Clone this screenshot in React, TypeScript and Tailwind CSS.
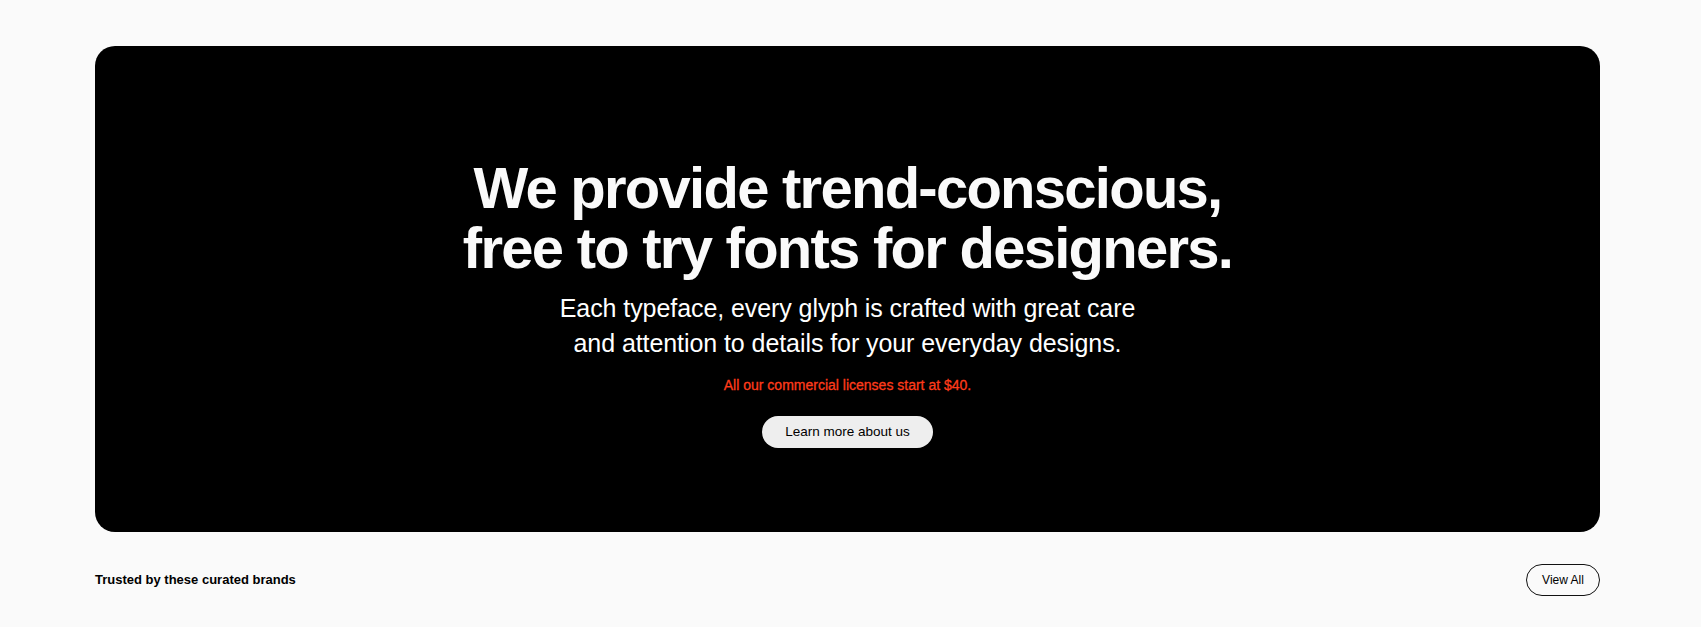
import React from "react";

export default function App() {
  return (
    <div
      className="min-h-[627px] w-full bg-[#fafafa] pt-[46px]"
      style={{ fontFamily: '"Liberation Sans", Arial, sans-serif' }}
    >
      <div className="ml-[95px] w-[1505px]">
        <section className="flex h-[486px] flex-col items-center rounded-[20px] bg-black pt-[112px] text-center">
          <h1 className="text-[58px] font-bold leading-[60px] tracking-[-0.03em] text-[#fafafa]">
            We provide trend-conscious,
            <br />
            free to try fonts for designers.
          </h1>
          <p className="mt-[13px] text-[25px] leading-[35px] tracking-[-0.003em] text-white">
            Each typeface, every glyph is crafted with great care
            <br />
            and attention to details for your everyday designs.
          </p>
          <p
            className="mt-[14px] text-[14px] leading-[20px] text-[#ff3b1a]"
            style={{ WebkitTextStroke: "0.3px #ff3b1a" }}
          >
            All our commercial licenses start at $40.
          </p>
          <button className="mt-[21px] h-[32px] w-[171px] rounded-full bg-[#eeeeee] text-[13.5px] text-black">
            Learn more about us
          </button>
        </section>
        <div className="mt-[32px] flex items-center justify-between">
          <span className="text-[13px] font-bold text-black">
            Trusted by these curated brands
          </span>
          <button className="h-[32px] w-[74px] rounded-full border border-[#111] text-[12px] text-black">
            View All
          </button>
        </div>
      </div>
    </div>
  );
}
